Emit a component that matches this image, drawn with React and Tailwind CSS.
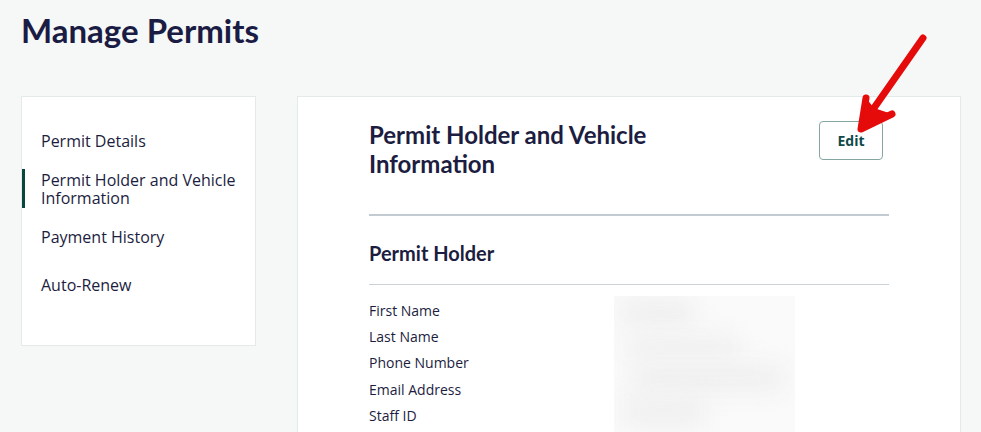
const navItems = [
  { label: 'Permit Details', cls: 'mt-[34px] py-[1px]' },
  { label: 'Permit Holder and Vehicle Information', active: true, cls: 'mt-[18px] py-[1.5px]' },
  { label: 'Payment History', cls: 'mt-[19px] py-[1px]' },
  { label: 'Auto-Renew', cls: 'mt-[28px] py-[1px]' },
];

const fields = ['First Name', 'Last Name', 'Phone Number', 'Email Address', 'Staff ID'];

// hidden values in the screenshot are blurred out
function BlurredValues() {
  return (
    <div className="relative w-[181px] h-[136px] mt-[11px] bg-[#fafafa] overflow-hidden">
      <div className="absolute left-[8px] top-[6px] w-[70px] h-[20px] bg-[#ececec] blur-md" />
      <div className="absolute left-[14px] top-[40px] w-[110px] h-[22px] bg-[#efefef] blur-md" />
      <div className="absolute left-[20px] top-[70px] w-[150px] h-[24px] bg-[#eeeeee] blur-md" />
      <div className="absolute left-[10px] top-[100px] w-[80px] h-[30px] bg-[#efefef] blur-md" />
    </div>
  );
}

export default function App() {
  return (
    <div className="relative w-[981px] h-[432px] overflow-hidden bg-[#f6f8f8] text-[#1c1d40]">
      <h1 className="pl-[21px] pt-[11px] font-['Lato'] text-[33px] font-bold leading-[39px] text-[#1b1c44]">
        Manage Permits
      </h1>

      <div className="flex items-start gap-[41px] pl-[21px] mt-[46px]">
        {/* side nav */}
        <div className="w-[235px] h-[250px] bg-white border border-[#e4e9ea] font-['Open_Sans'] text-[16px] leading-[18px]">
          {navItems.map((item) => (
            <div
              key={item.label}
              className={`${item.cls} flex border-l-[3px] ${item.active ? 'border-[#08473f]' : 'border-transparent'}`}
            >
              <span className="pl-[16px] pr-[10px]">{item.label}</span>
            </div>
          ))}
        </div>

        {/* main card */}
        <div className="w-[664px] h-[400px] bg-white border border-[#e4e9ea] pl-[71px] pr-[71px] pt-[23px]">
          <div className="flex justify-between items-start">
            <h2 className="w-[330px] font-['Lato'] text-[24px] font-bold leading-[29px]">
              Permit Holder and Vehicle Information
            </h2>
            <button className="mt-[1px] mr-[6px] w-[64px] h-[39px] rounded-[4px] border border-[#85a7a4] font-['Open_Sans'] text-[14px] font-bold text-[#0e4a4a]">
              Edit
            </button>
          </div>

          <div className="mt-[36px] h-[2px] bg-[#c3cbd2]" />

          <h3 className="mt-[25px] font-['Lato'] text-[20px] font-bold leading-[24px]">Permit Holder</h3>

          <div className="mt-[19px] h-[1px] bg-[#cbd2d7]" />

          <div className="flex">
            <div className="w-[245px] pt-[13px] font-['Open_Sans'] text-[14px] leading-[26.2px]">
              {fields.map((f) => (
                <div key={f}>{f}</div>
              ))}
            </div>
            <BlurredValues />
          </div>
        </div>
      </div>

      {/* annotation arrow */}
      <svg className="absolute left-0 top-0 pointer-events-none" width="981" height="432">
        <line x1="923" y1="38" x2="867" y2="118" stroke="#e50b0b" strokeWidth="7" strokeLinecap="round" />
        <path
          d="M866 98 L861 129 L892 114"
          fill="none"
          stroke="#e50b0b"
          strokeWidth="7"
          strokeLinecap="round"
          strokeLinejoin="round"
        />
        <polygon points="866,98 861,129 892,114 874,108" fill="#e50b0b" />
      </svg>
    </div>
  );
}
